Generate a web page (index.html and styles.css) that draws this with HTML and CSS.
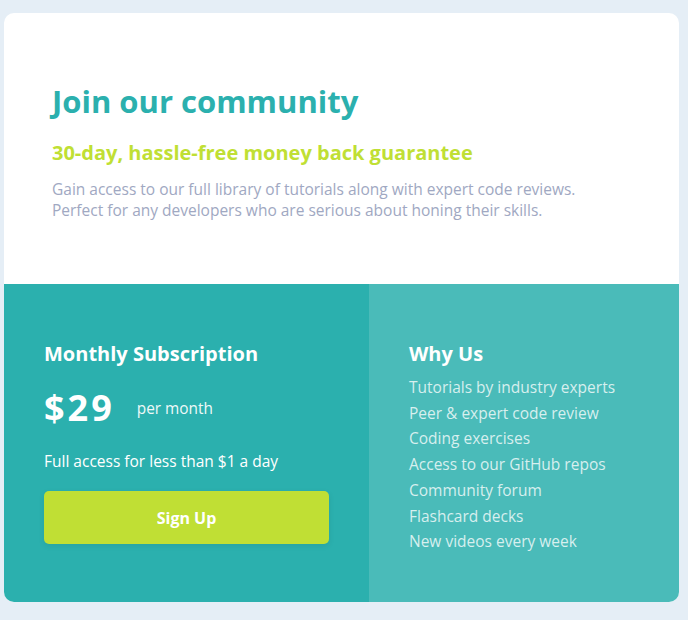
FILE: index.html
```html
<!DOCTYPE html>
<html lang="en">
<head>
<meta charset="utf-8">
<title>Single price grid</title>
<link rel="stylesheet" href="styles.css">
</head>
<body>
<main class="card">
  <section class="intro">
    <h1 class="title">Join our community</h1>
    <h2 class="subtitle">30-day, hassle-free money back guarantee</h2>
    <p class="desc">Gain access to our full library of tutorials along with expert code reviews.<br>Perfect for any developers who are serious about honing their skills.</p>
  </section>
  <div class="bottom">
    <section class="sub">
      <h3 class="heading">Monthly Subscription</h3>
      <div class="price-row">
        <span class="price">$29</span>
        <span class="per">per month</span>
      </div>
      <p class="access">Full access for less than $1 a day</p>
      <button class="btn" type="button">Sign Up</button>
    </section>
    <section class="why">
      <h3 class="heading">Why Us</h3>
      <ul class="list">
        <li>Tutorials by industry experts</li>
        <li>Peer &amp; expert code review</li>
        <li>Coding exercises</li>
        <li>Access to our GitHub repos</li>
        <li>Community forum</li>
        <li>Flashcard decks</li>
        <li>New videos every week</li>
      </ul>
    </section>
  </div>
</main>
</body>
</html>
```
FILE: styles.css
```css
* { box-sizing: border-box; }
html, body { margin: 0; padding: 0; }
body {
  background: #e5eef6;
  font-family: "Open Sans", "Noto Sans", sans-serif;
  padding: 13px 9px 18px 4px;
}
.card {
  width: 675px;
  height: 589px;
  background: #fff;
  border-radius: 10px;
  overflow: hidden;
  display: flex;
  flex-direction: column;
}
.intro {
  height: 271px;
  padding: 70px 48px 0 48px;
}
.title {
  margin: 0;
  color: #2bb0ae;
  font-size: 31px;
  font-weight: 700;
  line-height: 36px;
}
.subtitle {
  margin: 22px 0 0;
  color: #c0df34;
  font-size: 20px;
  font-weight: 700;
  line-height: 24px;
}
.desc {
  margin: 14px 0 0;
  color: #a0a8c2;
  font-size: 15.5px;
  line-height: 21px;
}
.bottom {
  flex: 1;
  display: flex;
}
.sub {
  width: 365px;
  background: #2bb0ae;
  color: #fff;
  padding: 57px 40px 0 40px;
}
.why {
  flex: 1;
  background: #4abbb9;
  color: #fff;
  padding: 57px 40px 0 40px;
}
.heading {
  margin: 0;
  font-size: 20px;
  font-weight: 700;
  line-height: 26px;
}
.price-row {
  display: flex;
  align-items: center;
  gap: 22px;
  margin-top: 21px;
}
.price {
  font-size: 36px;
  font-weight: 700;
  line-height: 40px;
  letter-spacing: 3px;
}
.per {
  font-size: 15.4px;
  opacity: 0.92;
}
.access {
  margin: 23px 0 0;
  font-size: 15.5px;
  line-height: 20px;
}
.btn {
  display: block;
  width: 285px;
  height: 53px;
  margin-top: 20px;
  border: none;
  border-radius: 5px;
  background: #c0df34;
  color: #fff;
  font-family: inherit;
  font-size: 16px;
  font-weight: 700;
  box-shadow: 0 2px 6px rgba(0,0,0,0.08);
}
.list {
  list-style: none;
  margin: 8px 0 0;
  padding: 0;
  color: rgba(255,255,255,0.78);
  font-size: 15.5px;
  line-height: 25.7px;
}
```
